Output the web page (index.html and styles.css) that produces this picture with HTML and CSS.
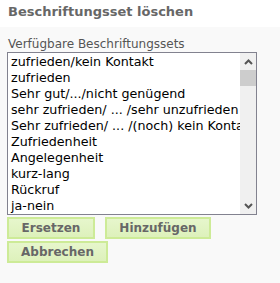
FILE: index.html
```html
<!DOCTYPE html>
<html>
  <head>
    <title>Beschriftungsset löschen</title>
    <link rel="stylesheet" href="styles.css">
  </head>
  <body>
    <div class="header">
      <h1 class="title">Beschriftungsset löschen</h1>
    </div>
    <div class="content">
      <label class="label">Verfügbare Beschriftungssets</label>
      <div class="listbox">
        <ul class="options">
          <li>zufrieden/kein Kontakt</li>
          <li>zufrieden</li>
          <li>Sehr gut/.../nicht genügend</li>
          <li>sehr zufrieden/ ... /sehr unzufrieden</li>
          <li>Sehr zufrieden/ ... /(noch) kein Kontakt</li>
          <li>Zufriedenheit</li>
          <li>Angelegenheit</li>
          <li>kurz-lang</li>
          <li>Rückruf</li>
          <li>ja-nein</li>
        </ul>
        <div class="scrollbar">
          <div class="arrow">
            <svg width="9" height="6" viewBox="0 0 9 6"><path d="M1 5 L4.5 1.5 L8 5" fill="none" stroke="#555" stroke-width="2"/></svg>
          </div>
          <div class="track">
            <div class="thumb"></div>
          </div>
          <div class="arrow">
            <svg width="9" height="6" viewBox="0 0 9 6"><path d="M1 1 L4.5 4.5 L8 1" fill="none" stroke="#555" stroke-width="2"/></svg>
          </div>
        </div>
      </div>
      <div class="buttons">
        <button class="btn btn-replace">Ersetzen</button>
        <button class="btn btn-add">Hinzufügen</button>
        <button class="btn btn-cancel">Abbrechen</button>
      </div>
    </div>
  </body>
</html>
```

FILE: styles.css
```css
body {
  margin: 0;
  background: #f9f9f9;
  font-family: "DejaVu Sans", Verdana, sans-serif;
}

.header {
  background: #fff;
  height: 27px;
  padding: 0 8px;
}

.title {
  margin: 0;
  padding-top: 3px;
  font-size: 13px;
  line-height: 18px;
  font-weight: bold;
  color: #676767;
}

.content {
  padding: 9px 7px 0;
}

.label {
  display: block;
  padding-left: 1px;
  font-size: 12px;
  line-height: 16px;
  color: #555;
}

.listbox {
  display: flex;
  width: 248px;
  height: 161px;
  background: #fff;
  border: 1px solid #82828f;
  overflow: hidden;
}

.options {
  flex: 1;
  margin: 0;
  padding: 1px 0 0 3px;
  list-style: none;
  overflow: hidden;
}

.options li {
  font-size: 12.7px;
  line-height: 16px;
  color: #000;
  white-space: nowrap;
}

.scrollbar {
  display: flex;
  flex-direction: column;
  width: 16px;
  background: #f0f0f0;
}

.arrow {
  display: flex;
  justify-content: center;
  align-items: center;
  height: 17px;
}

.track {
  flex: 1;
}

.thumb {
  height: 16px;
  background: #cdcdcd;
}

.buttons {
  display: flex;
  flex-wrap: wrap;
  gap: 2px 10px;
  width: 240px;
  margin-top: 2px;
}

.btn {
  height: 22px;
  padding: 0;
  background: linear-gradient(#e6f6cc, #ddf1bb);
  border: 2px solid #cdeb97;
  font-family: "DejaVu Sans", Verdana, sans-serif;
  font-size: 12px;
  font-weight: bold;
  color: #676767;
}

.btn-replace {
  width: 88px;
}

.btn-add {
  width: 106px;
}

.btn-cancel {
  width: 101px;
}
```
